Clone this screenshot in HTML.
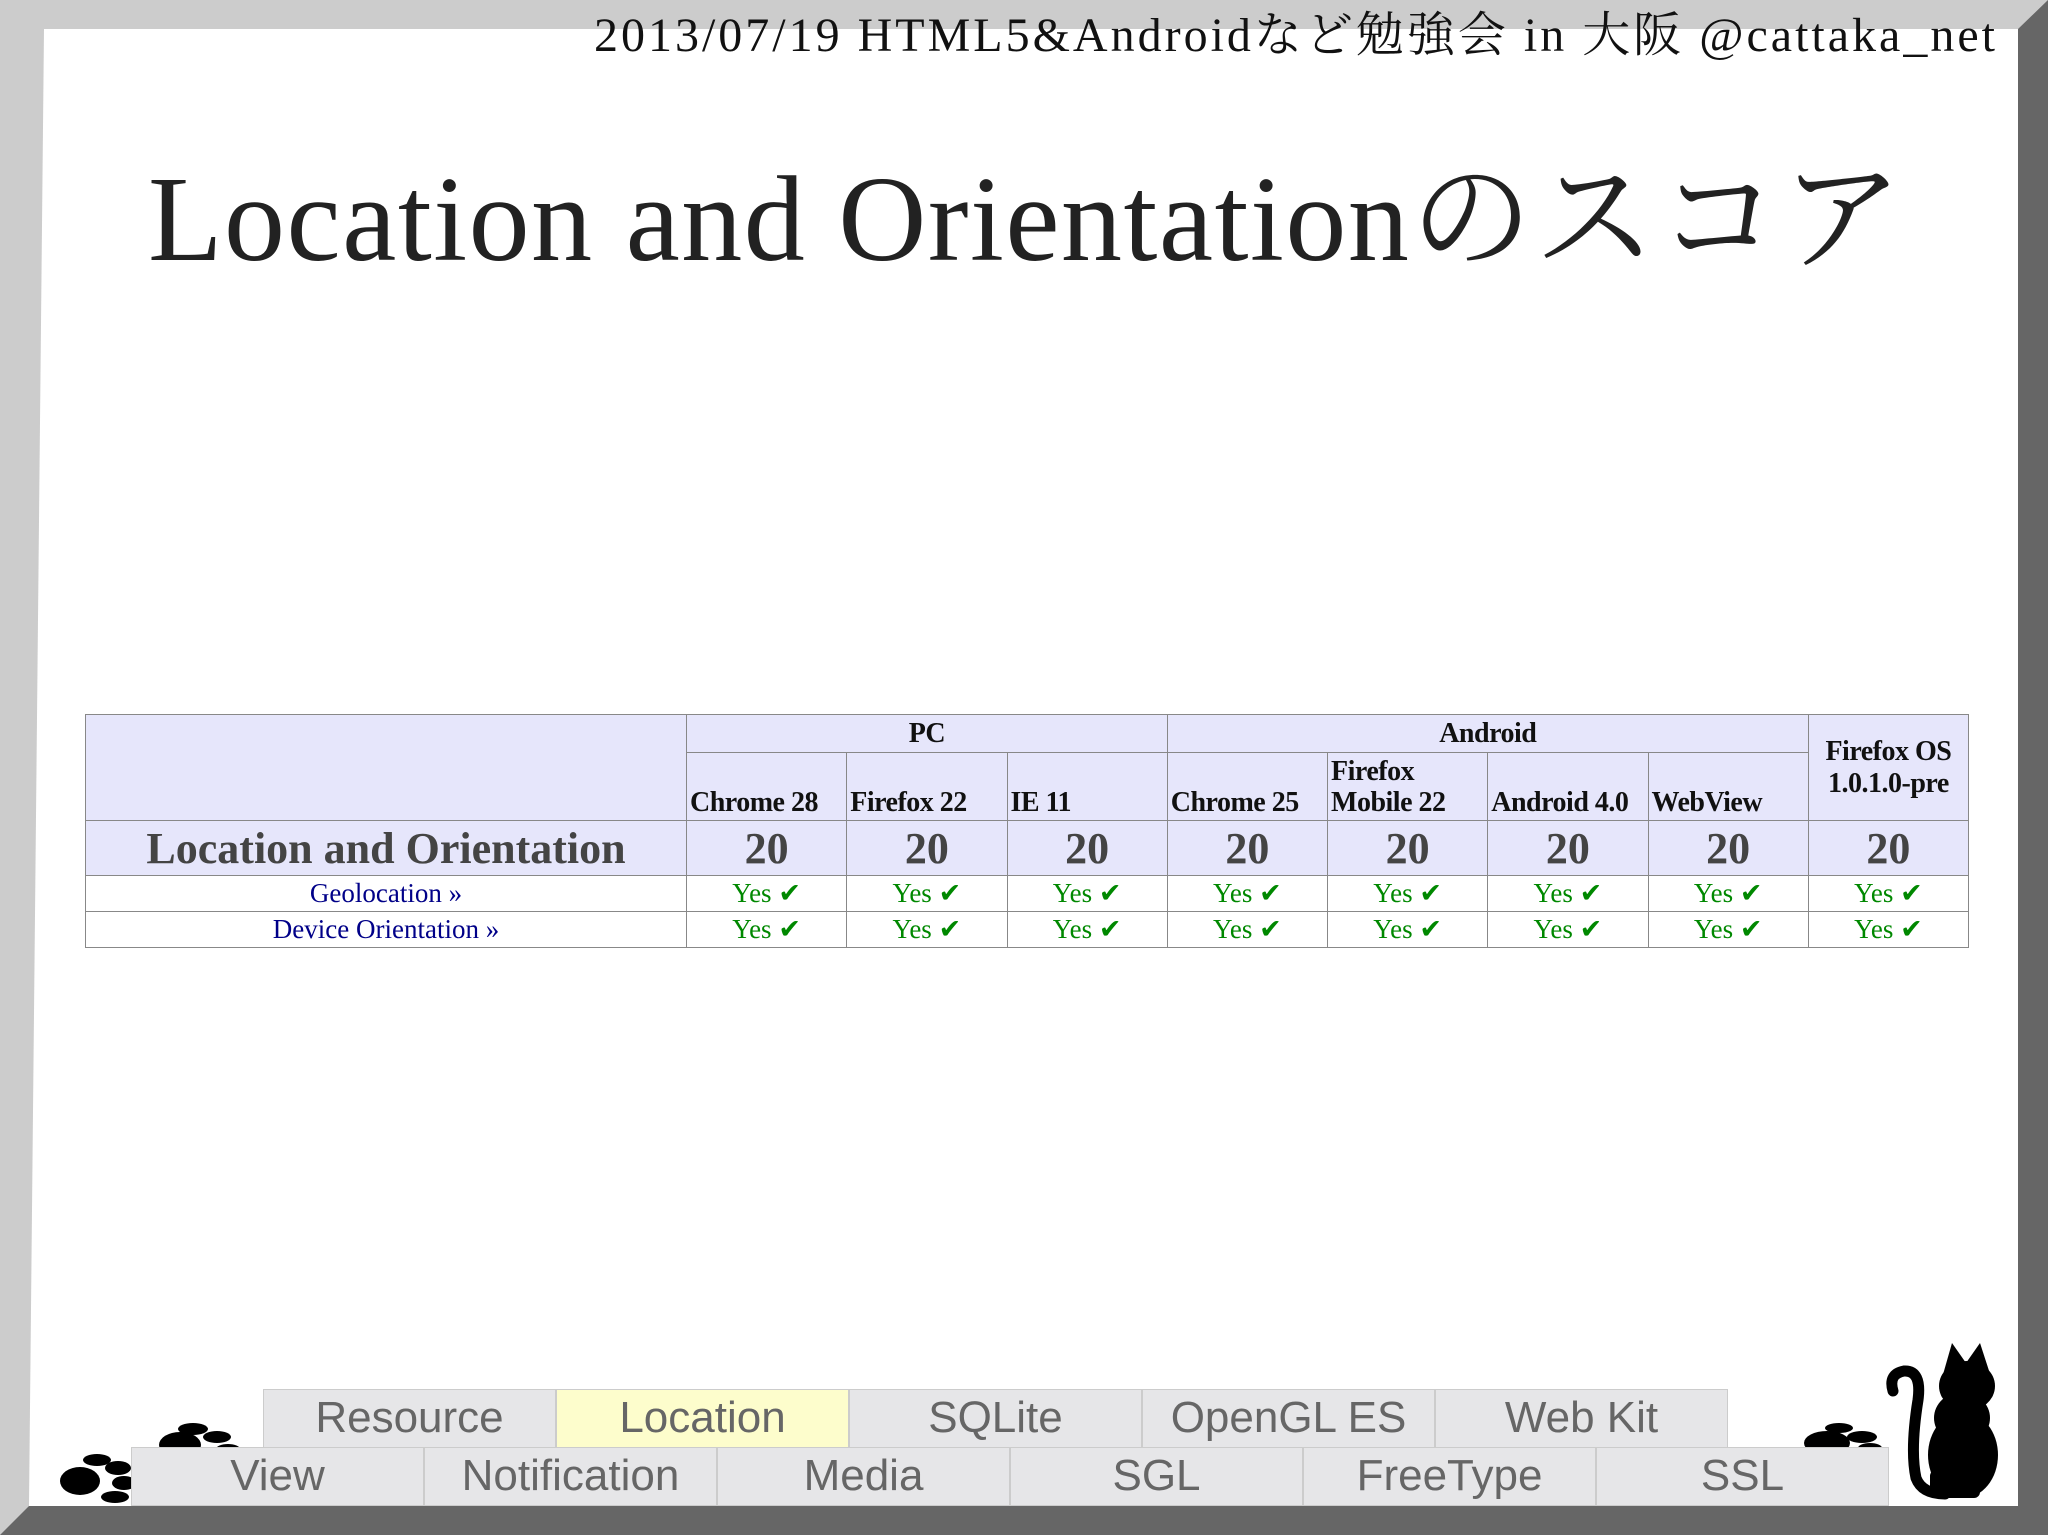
<!DOCTYPE html>
<html><head><meta charset="utf-8"><style>
*{margin:0;padding:0;box-sizing:border-box}
body{width:2048px;height:1535px;position:relative;overflow:hidden;background:#fff}
.hdr{position:absolute;right:50px;top:-4px;font:48px "Liberation Serif","Noto Serif CJK SC",serif;color:#111;white-space:nowrap;letter-spacing:3px}
.title{position:absolute;left:148px;top:120px;font:122px "Liberation Serif","Noto Serif CJK SC",serif;color:#222;white-space:nowrap;letter-spacing:1.5px}
table{position:absolute;left:85px;top:714px;width:1883px;border-collapse:collapse;font-family:"Liberation Serif",serif;table-layout:fixed}
td{border:1.5px solid #888;text-align:center;vertical-align:middle;padding:0}
.h{background:#e6e6fb;font-weight:bold;font-size:28px;color:#111;letter-spacing:-0.5px}
.sub td.h{text-align:left;vertical-align:bottom;padding:0 0 2px 3px;line-height:31px}
.sc td{background:#e6e6fb;font-weight:bold;font-size:44px;color:#444}
.y td{font-size:27px;color:#080;height:36px}
.y td.l{color:#008}
.nav div{position:absolute;width:293px;height:59px;background:#e6e6e8;border:1px solid #ccc;font:44px "Liberation Sans",sans-serif;color:#666;text-align:center;line-height:56px}
</style></head><body>
<svg width="2048" height="1535" style="position:absolute;left:0;top:0">
<rect width="2048" height="1535" fill="#cccccc"/>
<polygon points="44,29 2018,29 2018,1506 29,1506" fill="#fff"/>
<polygon points="2018,29 2048,0 2048,1535 2018,1535" fill="#666"/>
<polygon points="29,1506 2048,1506 2048,1535 0,1535" fill="#666"/>
<g fill="#000">
<ellipse cx="80" cy="1481" rx="20" ry="14"/><ellipse cx="97" cy="1460" rx="14" ry="6"/><ellipse cx="118" cy="1468" rx="13" ry="7"/><ellipse cx="124" cy="1483" rx="12" ry="7"/><ellipse cx="115" cy="1497" rx="14" ry="6"/>
<ellipse cx="180" cy="1445" rx="21" ry="13"/><ellipse cx="193" cy="1429" rx="15" ry="6"/><ellipse cx="217" cy="1437" rx="14" ry="6"/><ellipse cx="228" cy="1449" rx="12" ry="5"/>
<ellipse cx="1827" cy="1443" rx="23" ry="12"/><ellipse cx="1839" cy="1428" rx="14" ry="5"/><ellipse cx="1862" cy="1437" rx="15" ry="6"/><ellipse cx="1870" cy="1448" rx="12" ry="5"/>
<ellipse cx="1963" cy="1455" rx="35" ry="43"/>
<ellipse cx="1962" cy="1418" rx="28" ry="26"/>
<ellipse cx="1967" cy="1386" rx="28" ry="25"/>
<polygon points="1942,1378 1952,1343 1966,1363"/>
<polygon points="1966,1363 1980,1343 1992,1380"/>
<rect x="1930" y="1470" width="50" height="28" rx="6"/>
</g>
<path d="M1893,1391 Q1888,1374 1904,1371 Q1922,1370 1918,1400 Q1910,1450 1916,1478 Q1922,1494 1945,1494" stroke="#000" stroke-width="11" fill="none" stroke-linecap="round"/>
</svg>
<div class="hdr">2013/07/19 HTML5&amp;Androidなど勉強会 in 大阪 @cattaka_net</div>
<div class="title">Location and Orientationのスコア</div>
<table>
<colgroup><col style="width:601px"><col span="8" style="width:160.25px"></colgroup>
<tr style="height:38px"><td class="h" rowspan="2"></td><td class="h" colspan="3">PC</td><td class="h" colspan="4">Android</td><td class="h" rowspan="2">Firefox OS<br>1.0.1.0-pre</td></tr>
<tr class="sub" style="height:68px"><td class="h">Chrome 28</td><td class="h">Firefox 22</td><td class="h">IE 11</td><td class="h">Chrome 25</td><td class="h">Firefox<br>Mobile 22</td><td class="h">Android 4.0</td><td class="h">WebView</td></tr>
<tr class="sc" style="height:55px"><td>Location and Orientation</td><td>20</td><td>20</td><td>20</td><td>20</td><td>20</td><td>20</td><td>20</td><td>20</td></tr>
<tr class="y"><td class="l">Geolocation »</td><td>Yes ✔</td><td>Yes ✔</td><td>Yes ✔</td><td>Yes ✔</td><td>Yes ✔</td><td>Yes ✔</td><td>Yes ✔</td><td>Yes ✔</td></tr>
<tr class="y"><td class="l">Device Orientation »</td><td>Yes ✔</td><td>Yes ✔</td><td>Yes ✔</td><td>Yes ✔</td><td>Yes ✔</td><td>Yes ✔</td><td>Yes ✔</td><td>Yes ✔</td></tr>
</table>
<div class="nav">
<div style="left:263px;top:1389px">Resource</div>
<div style="left:556px;top:1389px;background:#fdfdcc">Location</div>
<div style="left:849px;top:1389px">SQLite</div>
<div style="left:1142px;top:1389px">OpenGL ES</div>
<div style="left:1435px;top:1389px">Web Kit</div>
<div style="left:131px;top:1447px">View</div>
<div style="left:424px;top:1447px">Notification</div>
<div style="left:717px;top:1447px">Media</div>
<div style="left:1010px;top:1447px">SGL</div>
<div style="left:1303px;top:1447px">FreeType</div>
<div style="left:1596px;top:1447px">SSL</div>
</div>
</body></html>
